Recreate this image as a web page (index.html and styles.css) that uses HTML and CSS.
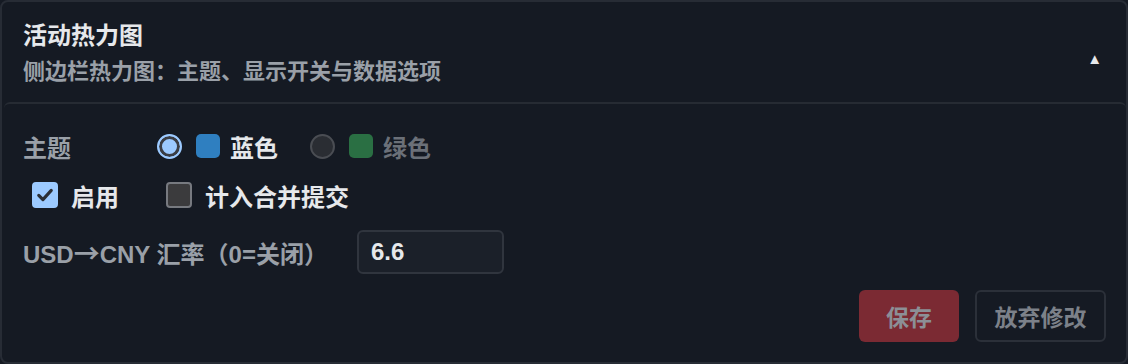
FILE: index.html
```html
<!DOCTYPE html>
<html lang="zh-CN">

<head>
    <meta charset="UTF-8">
    <meta name="viewport" content="width=device-width, initial-scale=1.0">
    <title>活动热力图</title>
    <link rel="stylesheet" href="styles.css">
</head>

<body>
    <div class="card">
        <div class="card-head">
            <div class="head-text">
                <div class="title">活动热力图</div>
                <div class="subtitle">侧边栏热力图：主题、显示开关与数据选项</div>
            </div>
            <span class="toggle">▲</span>
        </div>
        <div class="card-body">
            <div class="row theme-row">
                <span class="label">主题</span>
                <label class="option">
                    <span class="radio checked"></span>
                    <span class="swatch blue"></span>
                    <span class="option-text">蓝色</span>
                </label>
                <label class="option">
                    <span class="radio"></span>
                    <span class="swatch green"></span>
                    <span class="option-text muted">绿色</span>
                </label>
            </div>
            <div class="row check-row">
                <label class="check-item">
                    <span class="checkbox checked">
                        <svg viewBox="0 0 24 24" width="20" height="20"><path d="M4.5 12.5l5 5L19.5 6.5" fill="none" stroke="#2b2f36" stroke-width="3.8" stroke-linecap="round" stroke-linejoin="round"/></svg>
                    </span>
                    <span>启用</span>
                </label>
                <label class="check-item">
                    <span class="checkbox"></span>
                    <span>计入合并提交</span>
                </label>
            </div>
            <div class="row rate-row">
                <span class="label rate-label">USD<span class="arrow">→</span>CNY 汇率（0=关闭）</span>
                <input type="text" class="rate-input" value="6.6">
            </div>
            <div class="actions">
                <button class="btn btn-save">保存</button>
                <button class="btn btn-discard">放弃修改</button>
            </div>
        </div>
    </div>
</body>

</html>
```

FILE: styles.css
```css
body {
    margin: 0;
    background: #151a23;
    font-family: "Liberation Sans", "Noto Sans CJK SC", sans-serif;
    font-weight: bold;
}

.card {
    height: 364px;
    box-sizing: border-box;
    border: 2px solid #272c35;
    border-radius: 8px;
    background: #151a23;
}

.card-head {
    display: flex;
    justify-content: space-between;
    height: 100px;
    padding: 19px 24px 0 21px;
    box-sizing: border-box;
}

.title {
    font-size: 24px;
    color: #e6e8eb;
    line-height: 30px;
}

.subtitle {
    margin-top: 6px;
    font-size: 22px;
    color: #9aa0a8;
    line-height: 30px;
}

.toggle {
    font-size: 15px;
    color: #e6e8eb;
    line-height: 30px;
    margin-top: 23px;
}

.card-body {
    border-top: 2px solid #262b33;
    border-radius: 6px 6px 0 0;
    margin-left: 2px;
    padding: 20px 20px 0 19px;
}

.row {
    display: flex;
    align-items: center;
}

.label {
    color: #9aa0a8;
    font-size: 24px;
}

.arrow {
    display: inline-block;
    width: 26px;
    text-align: center;
    font-family: "Noto Sans CJK SC", sans-serif;
    font-weight: bold;
    font-size: 26px;
    line-height: 1;
}

.theme-row {
    height: 44px;
    gap: 32px;
}

.theme-row .label {
    width: 102px;
}

.option {
    display: flex;
    align-items: center;
    gap: 10px;
    font-size: 24px;
}

.option-text {
    color: #e6e8eb;
}

.option-text.muted {
    color: #6b7078;
}

.radio {
    width: 21px;
    height: 21px;
    border-radius: 50%;
    border: 2px solid #4a4d53;
    background: #2a2d33;
    margin-right: 4px;
}

.radio.checked {
    border: 2px solid #9ccaff;
    background: #9ccaff;
    box-shadow: inset 0 0 0 3px #3a3d44;
}

.swatch {
    width: 24px;
    height: 24px;
    border-radius: 5px;
}

.swatch.blue {
    background: #2f7fc0;
}

.swatch.green {
    background: #2a6f43;
}

.check-row {
    height: 54px;
    gap: 47px;
    padding-left: 9px;
}

.check-item {
    display: flex;
    align-items: center;
    gap: 13px;
    font-size: 24px;
    color: #e6e8eb;
}

.checkbox {
    display: flex;
    align-items: center;
    justify-content: center;
    width: 22px;
    height: 22px;
    border-radius: 4px;
    border: 2px solid #777a80;
    background: #3b3b3d;
}

.checkbox.checked {
    border-color: #9ccaff;
    background: #9ccaff;
}

.rate-row {
    height: 60px;
    gap: 29px;
}

.rate-input {
    width: 147px;
    height: 44px;
    box-sizing: border-box;
    padding: 0 12px;
    border: 2px solid #30353e;
    border-radius: 6px;
    background: #1b2029;
    color: #e6e8eb;
    font-family: inherit;
    font-weight: bold;
    font-size: 24px;
    outline: none;
}

.actions {
    display: flex;
    justify-content: flex-end;
    gap: 16px;
    margin-top: 8px;
}

.btn {
    height: 52px;
    padding: 0;
    border-radius: 6px;
    font-family: inherit;
    font-weight: bold;
    font-size: 23px;
    white-space: nowrap;
    color: #7c8189;
    cursor: pointer;
}

.btn-save {
    width: 100px;
    border: none;
    background: #7b2a33;
    color: #8c8f96;
}

.btn-discard {
    width: 131px;
    border: 2px solid #2b3039;
    background: transparent;
}
```
